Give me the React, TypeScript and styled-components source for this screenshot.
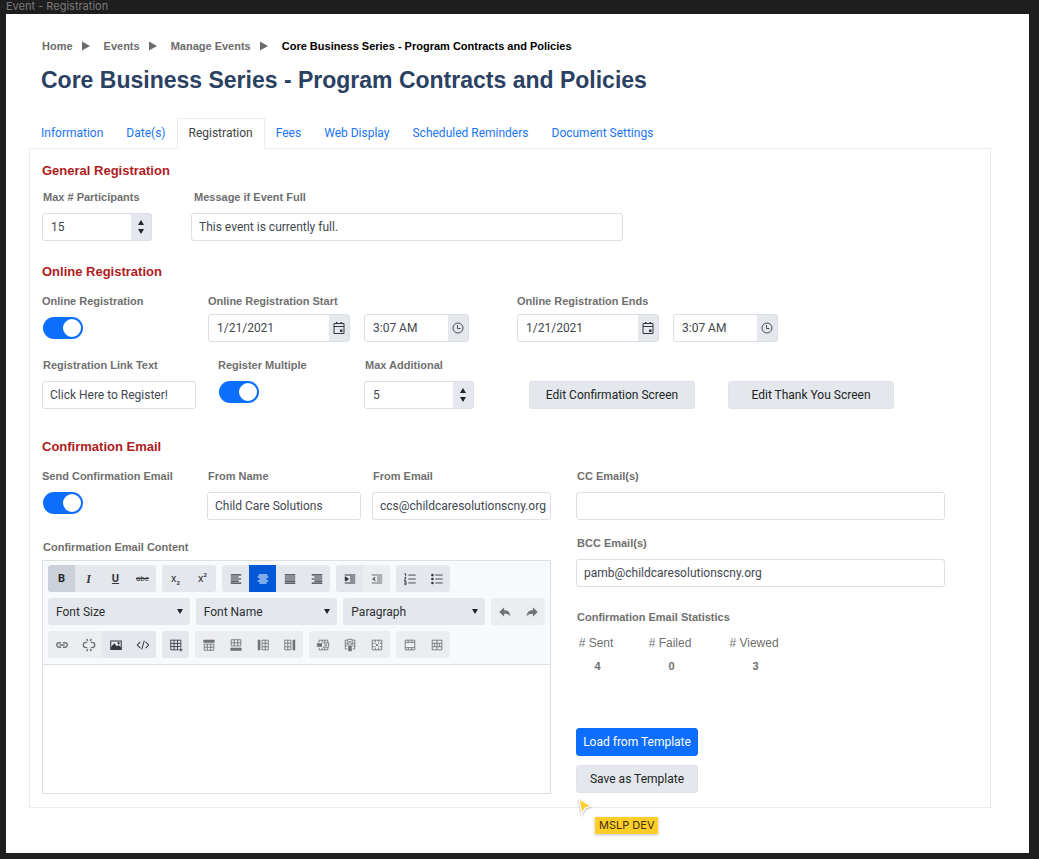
import React from "react";
import styled, { createGlobalStyle, css } from "styled-components";

const sans = `"Liberation Sans", Arial, sans-serif`;
const roboto = `Roboto, "Liberation Sans", sans-serif`;

const GlobalStyle = createGlobalStyle`
  *, *::before, *::after { box-sizing: border-box; }
  body {
    margin: 0;
    background: #1e1e1e;
    font-family: ${roboto};
    font-size: 12px;
    line-height: 16px;
    color: #424242;
  }
  button, input, select, textarea { font: inherit; color: inherit; }
`;

const Canvas = styled.div`
  display: flex;
  flex-direction: column;
  padding: 0 10px 6px 6px;
`;

const FrameName = styled.div`
  height: 14px;
  font-family: Inter, sans-serif;
  font-size: 11px;
  line-height: 12px;
  color: #7b7b7b;
`;

const Frame = styled.main`
  padding: 24px 38px 45px 23px;
  background: #fff;
`;

const Crumbs = styled.ol`
  display: flex;
  margin: 0;
  padding: 0 0 0 13px;
  list-style: none;
  font-family: ${sans};
  font-size: 11px;
  font-weight: 700;
  line-height: 16px;
`;

const Crumb = styled.li`
  display: flex;
  align-items: center;
  color: #000;

  a { color: #6b6b6b; text-decoration: none; }
  svg { margin: 0 14px 0 9px; }
`;

const Title = styled.h1`
  margin: 10px 0 22px 12px;
  font-family: ${sans};
  font-size: 23px;
  line-height: 32px;
  color: #2b4162;
`;

const Tabs = styled.nav`
  display: flex;
  height: 31px;
  margin-bottom: -1px;
`;

const Tab = styled.a<{ $active?: boolean }>`
  position: relative;
  padding: 6px 11px 0;
  margin-right: -1px;
  border: 1px solid ${(p) => (p.$active ? "#ececee" : "transparent")};
  border-bottom: 0;
  background: ${(p) => (p.$active ? "#fff" : "transparent")};
  color: ${(p) => (p.$active ? "#424242" : "#1a74f5")};
  text-decoration: none;
`;

const Panel = styled.form`
  padding: 12px 12px 13px;
  border: 1px solid #ececee;
`;

const Section = styled.section`
  & + & { margin-top: 21px; }
  & + &:last-of-type { margin-top: 28px; }
`;

const Heading = styled.h2<{ $gap?: number }>`
  margin: 0 0 ${(p) => p.$gap ?? 11}px;
  font-family: ${sans};
  font-size: 13px;
  line-height: 20px;
  color: #ae1b20;
`;

const Row = styled.div<{ $cols: string }>`
  display: grid;
  grid-template-columns: ${(p) => p.$cols};
  align-items: start;
  & + & { margin-top: 15px; }
`;

const Field = styled.div<{ $gap?: number; $width?: number }>`
  display: flex;
  flex-direction: column;
  align-items: flex-start;
  gap: ${(p) => p.$gap ?? 8}px;
  max-width: ${(p) => (p.$width ? `${p.$width}px` : "none")};
`;

const labelText = css`
  font-family: ${sans};
  font-size: 11px;
  font-weight: 700;
  line-height: 16px;
  color: #6f6f6f;
  white-space: nowrap;
`;

const Label = styled.label<{ $indent?: number }>`
  ${labelText}
  padding-left: ${(p) => p.$indent ?? 0}px;
`;

const TextInput = styled.input`
  width: 100%;
  height: 28px;
  padding: 0 0 0 7px;
  border: 1px solid #dcdfe5;
  border-radius: 3px;
  background: #fff;
  color: #424750;
`;

const Combo = styled.div<{ $width: number }>`
  display: flex;
  width: ${(p) => p.$width}px;
  height: 28px;
  overflow: hidden;
  border: 1px solid #dcdfe5;
  border-radius: 3px;
  background: #e4e7eb;

  input {
    flex: 1;
    min-width: 0;
    padding: 0 8px;
    border: 0;
    background: #fff;
    color: #424750;
    appearance: textfield;
  }
  input::-webkit-inner-spin-button { display: none; }
`;

const ComboButton = styled.button`
  display: grid;
  place-items: center;
  width: 20px;
  padding: 0;
  border: 0;
  background: transparent;
`;

const Steppers = styled.div`
  display: flex;
  flex-direction: column;
  justify-content: center;
  gap: 4px;

  button { height: 5px; }
`;

const Pair = styled.div`
  display: flex;
  gap: 14px;
`;

const Switch = styled.input.attrs({ type: "checkbox", role: "switch" })`
  appearance: none;
  width: 40px;
  height: 22px;
  margin: 0 0 0 1px;
  border-radius: 11px;
  background: #dcdfe5;

  &::before {
    content: "";
    display: block;
    width: 18px;
    height: 18px;
    margin: 2px;
    border-radius: 50%;
    background: #fff;
  }
  &:checked { background: #0d6efd; }
  &:checked::before { margin-left: 20px; }
`;

const Button = styled.button<{ $primary?: boolean; $width: number }>`
  align-self: end;
  width: ${(p) => p.$width}px;
  height: 28px;
  padding: 0;
  border: 1px solid ${(p) => (p.$primary ? "#0d6efd" : "#dfe2e7")};
  border-radius: 3px;
  background: ${(p) => (p.$primary ? "#0d6efd" : "#e4e7eb")};
  color: ${(p) => (p.$primary ? "#fff" : "#212529")};
`;

const Columns = styled.div`
  display: grid;
  grid-template-columns: 509fr 369fr;
  column-gap: 25px;
  margin-right: 33px;
`;

const Stack = styled.div<{ $gap: number }>`
  display: flex;
  flex-direction: column;
  align-items: stretch;
  gap: ${(p) => p.$gap}px;
  min-width: 0;
`;

const Editor = styled.div`
  display: flex;
  flex-direction: column;
  width: 100%;
  height: 234px;
  border: 1px solid #dcdfe3;
`;

const Toolbar = styled.div`
  display: flex;
  flex-direction: column;
  gap: 6px;
  padding: 4px 5px 6px;
  border-bottom: 1px solid #dcdfe3;
  background: #f8f9fb;
`;

const ToolRow = styled.div`
  display: flex;
  gap: 6px;
`;

const Group = styled.div`
  display: flex;
  overflow: hidden;
  border-radius: 3px;
`;

const toolTone = {
  normal: css`background: #e4e7eb; color: #34373c;`,
  disabled: css`background: #ecedf0; color: #6f7276;`,
  pressed: css`background: #cbd0d9; color: #212529;`,
  active: css`background: #0058d6; color: #fff;`,
};

const Tool = styled.button<{ $tone: keyof typeof toolTone }>`
  display: grid;
  place-items: center;
  width: 27px;
  height: 27px;
  padding: 0;
  border: 0;
  ${(p) => toolTone[p.$tone]}
`;

const Glyph = styled.span<{ $kind: "bold" | "italic" | "underline" | "strike" | "script" }>`
  font-size: 11px;
  line-height: 14px;
  ${(p) => p.$kind === "bold" && css`font-weight: 700;`}
  ${(p) => p.$kind === "underline" && css`font-weight: 700; text-decoration: underline;`}
  ${(p) => p.$kind === "italic" && css`font: italic 700 12px/14px "Liberation Serif", serif;`}
  ${(p) => p.$kind === "strike" && css`font-size: 8px; text-decoration: line-through;`}
  sub, sup { font-size: 6px; font-weight: 700; line-height: 0; }
`;

const Picker = styled.div`
  position: relative;
  flex: 1;

  select {
    width: 100%;
    height: 27px;
    padding: 0 8px;
    border: 0;
    border-radius: 3px;
    background: #e4e7eb;
    color: #2c2f34;
    appearance: none;
  }
  svg { position: absolute; right: 7px; top: 11px; pointer-events: none; }
`;

const Content = styled.textarea`
  flex: 1;
  width: 100%;
  padding: 8px;
  border: 0;
  background: #fff;
  resize: none;
`;

const Stats = styled.table`
  margin-top: 22px;
  border-collapse: collapse;
  table-layout: fixed;
  width: 208px;
  font-family: ${sans};
  color: #6f6f6f;

  caption { ${labelText} text-align: left; padding: 0 0 10px 1px; }
  th, td { padding: 0; text-align: center; line-height: 16px; white-space: nowrap; }
  th { font-size: 12px; font-weight: 400; }
  td { padding-top: 7px; padding-left: 3px; font-size: 11px; font-weight: 700; }
  th:nth-child(1) { width: 40px; }
  th:nth-child(2) { width: 108px; }
`;

const Actions = styled.div`
  position: relative;
  display: flex;
  flex-direction: column;
  gap: 9px;
  width: 122px;
  margin-top: 54px;
`;

const Pointer = styled.div`
  position: absolute;
  left: 1px;
  top: 69px;
  pointer-events: none;

  svg { display: block; filter: drop-shadow(0 1px 1px rgba(0, 0, 0, 0.3)); }
  span {
    display: block;
    margin-left: 18px;
    padding: 0 4px;
    background: #ffcd29;
    box-shadow: 0 1px 3px rgba(0, 0, 0, 0.25);
    font: 11px/17px Inter, sans-serif;
    color: #3c3210;
    white-space: nowrap;
  }
`;

const Triangle = ({ dir }: { dir: "up" | "down" | "right" }) =>
  dir === "right" ? (
    <svg width="8" height="10" viewBox="0 0 8 10" aria-hidden="true"><path d="M0 .5 8 5 0 9.500z" fill="#6b6b6b" /></svg>
  ) : (
    <svg width="6" height="5" viewBox="0 0 6 5" aria-hidden="true">
      <path d={dir === "up" ? "M0 5 3 0 6 5z" : "M0 0 3 5 6 0z"} fill="#212529" />
    </svg>
  );

const CalendarIcon = () => (
  <svg width="12" height="12" viewBox="0 0 12 12" fill="none" stroke="#34373c" aria-hidden="true">
    <path d="M1 1.500h10v10H1zM1 4.500h10" />
    <path d="M3 1h1.500M7.500 1H9" strokeWidth="2" />
    <path d="M7 7.500h2.500V10H7z" fill="#34373c" stroke="none" />
  </svg>
);

const ClockIcon = () => (
  <svg width="12" height="12" viewBox="0 0 12 12" fill="none" stroke="#4a4d52" aria-hidden="true">
    <circle cx="6" cy="6" r="5" />
    <path d="M5.500 3v3.500H8.500" />
  </svg>
);

const icons: Record<string, React.ReactNode> = {
  left: <path d="M2 3.400h12M2 5.700h9M2 8h12M2 10.300h9M2 12.600h12" strokeWidth="1.400" />,
  center: <path d="M3 3.400h10M2 5.700h12M4 8h8M2 10.300h12M4 12.600h8" strokeWidth="1.200" />,
  justify: <path d="M2 3.400h12M2 5.700h12M2 8h12M2 10.300h12M2 12.600h12" strokeWidth="1.400" />,
  right: <path d="M2 3.400h12M5 5.700h9M2 8h12M5 10.300h9M2 12.600h12" strokeWidth="1.400" />,
  indent: <><path d="M2 3.400h12M8 5.700h6M8 8h6M8 10.300h6M2 12.600h12" strokeWidth="1.200" /><path d="M2 5h1v2l4 1-4 3v-1H2zM3 5l4 3-4 3z" fill="currentColor" stroke="none" /></>,
  outdent: <><path d="M2 3.400h12M8 5.700h6M8 8h6M8 10.300h6M2 12.600h12" strokeWidth="1.200" /><path d="M6 5 2 8l4 3z" fill="currentColor" stroke="none" /></>,
  ordered: <path d="M6 3.500h8.500M6 8h8.500M6 12.500h8.500M1.500 2H3v3M1.500 6.500h2L1.500 9.500h2M1.500 11h2v3.500h-2M1.500 12.800h2" />,
  bullets: <><path d="M6 3.500h8.500M6 8h8.500M6 12.500h8.500" /><g fill="currentColor" stroke="none"><circle cx="2.800" cy="3.500" r="1.500" /><circle cx="2.800" cy="8" r="1.500" /><circle cx="2.800" cy="12.500" r="1.500" /></g></>,
  undo: <path d="M7 2.500V6c5 0 7 3 7 7-1.500-2.300-3.500-3-7-3v3.500L1.500 8z" fill="currentColor" stroke="none" />,
  redo: <path d="M9 2.500V6c-5 0-7 3-7 7 1.500-2.300 3.500-3 7-3v3.500L14.500 8z" fill="currentColor" stroke="none" />,
  link: <path d="M7 10.500H4.500a2.500 2.500 0 0 1 0-5H7M9 5.500h2.500a2.500 2.500 0 0 1 0 5H9M5 8h6" strokeWidth="1.600" />,
  unlink: <path d="M6 11H4.500a3 3 0 0 1 0-6H6M10 5h1.500a3 3 0 0 1 0 6H10M6.500 3.500 5.500 1M9.500 3.500l1-2.500M6.500 12.500l-1 2.500M9.500 12.500l1 2.500" strokeWidth="1.600" />,
  image: <><path d="M2 3.500h12v9.500H2z" strokeWidth="1.200" /><path d="M2.500 13v-3L6 6l3 3.500L11 8l3 3v2z" fill="currentColor" stroke="none" /><circle cx="11" cy="6" r="1.300" fill="currentColor" stroke="none" /></>,
  code: <path d="M5 4.500 1.500 8 5 11.500M11 4.500 14.500 8 11 11.500M9.500 3l-3 10" strokeWidth="1.200" />,
  table: <path d="M2 2.500h11.500V11M2 2v11.500h9M2 6.200h11.500M2 9.800h11.500M5.800 2.500v11M9.700 2.500v11M13.500 11.500v4M11.500 13.500h4" />,
  rowAbove: <><path d="M1.500 2h13v3.500h-13z" fill="currentColor" stroke="none" /><path d="M2.500 7v7h11V7M2.500 10.500h11M6 7v7M10 7v7M2.500 7h11" /></>,
  rowBelow: <><path d="M1.500 11h13v3.500h-13z" fill="currentColor" stroke="none" /><path d="M2.500 2v7h11V2M2.500 5.500h11M6 2v7M10 2v7M2.500 2h11" /></>,
  colLeft: <><path d="M2 2h3v12H2z" fill="currentColor" stroke="none" /><path d="M7 2.500h7v11H7zM10.500 2.500v11M7 6h7M7 10h7" /></>,
  colRight: <><path d="M11 2h3v12h-3z" fill="currentColor" stroke="none" /><path d="M2 2.500h7v11H2zM5.500 2.500v11M2 6h7M2 10h7" /></>,
  deleteRow: <><path d="M3.500 5V2.500h10V5M7 2.500V5M10 2.500V5M3.500 11v2.500h10V11M7 11v2.500M10 11v2.500M8 5.500h6.500v5H8M9.500 6.500l3 3M12.500 6.500l-3 3" /><path d="M1 6h6v4H1z" fill="currentColor" stroke="none" /></>,
  deleteColumn: <><path d="M5 2.500H2.500v10H5M2.500 6H5M2.500 9H5M11 2.500h2.500v10H11M11 6h2.500M11 9h2.500M5.500 1.500h5V8h-5zM6.500 3.500l3 3M9.500 3.500l-3 3" /><path d="M6 9h4v6H6z" fill="currentColor" stroke="none" /></>,
  deleteTable: <><path d="M2.500 2.500h11v11h-11z" /><path d="M6 2.500V5M10 2.500V5M6 11v2.500M10 11v2.500M2.500 6H5M2.500 10H5M11 6h2.500M11 10h2.500M6 6l4 4M10 6l-4 4" /></>,
  merge: <path d="M2.500 2.500h11v11h-11zM2.500 5h11M2.500 11h11M6 2.500V5M10 2.500V5M6 11v2.500M10 11v2.500" />,
  split: <path d="M2.500 2.500h11v11h-11zM2.500 6h11M2.500 10h11M8 2.500v11M5.300 6v4M10.700 6v4" />,
};

type Item = [label: string, icon: React.ReactNode, tone?: keyof typeof toolTone];

const ToolGroup = ({ items }: { items: Item[] }) => (
  <Group role="group">
    {items.map(([label, icon, tone = "normal"]) => (
      <Tool key={label} type="button" aria-label={label} title={label} $tone={tone} disabled={tone === "disabled"}>
        {typeof icon === "string" ? (
          <svg width="14" height="14" viewBox="0 0 16 16" fill="none" stroke="currentColor" aria-hidden="true">{icons[icon]}</svg>
        ) : icon}
      </Tool>
    ))}
  </Group>
);

const textGroup: Item[] = [
  ["Bold", <Glyph $kind="bold">B</Glyph>, "pressed"],
  ["Italic", <Glyph $kind="italic">I</Glyph>],
  ["Underline", <Glyph $kind="underline">U</Glyph>],
  ["Strikethrough", <Glyph $kind="strike">abc</Glyph>],
];
const scriptGroup: Item[] = [
  ["Subscript", <Glyph $kind="script">x<sub>2</sub></Glyph>],
  ["Superscript", <Glyph $kind="script">x<sup>2</sup></Glyph>],
];
const alignGroup: Item[] = [["Align left", "left"], ["Align center", "center", "active"], ["Justify", "justify"], ["Align right", "right"]];
const indentGroup: Item[] = [["Indent", "indent"], ["Outdent", "outdent", "disabled"]];
const listGroup: Item[] = [["Ordered list", "ordered"], ["Bulleted list", "bullets"]];
const historyGroup: Item[] = [["Undo", "undo", "disabled"], ["Redo", "redo", "disabled"]];
const insertGroup: Item[] = [["Insert link", "link", "disabled"], ["Remove link", "unlink", "disabled"], ["Insert image", "image"], ["View source", "code"]];
const addGroup: Item[] = [
  ["Add row above", "rowAbove", "disabled"], ["Add row below", "rowBelow", "disabled"],
  ["Add column left", "colLeft", "disabled"], ["Add column right", "colRight", "disabled"],
];
const deleteGroup: Item[] = [["Delete row", "deleteRow", "disabled"], ["Delete column", "deleteColumn", "disabled"], ["Delete table", "deleteTable", "disabled"]];
const cellGroup: Item[] = [["Merge cells", "merge", "disabled"], ["Split cell", "split", "disabled"]];

const Dropdown = ({ name }: { name: string }) => (
  <Picker>
    <select aria-label={name}><option>{name}</option></select>
    <Triangle dir="down" />
  </Picker>
);

const NumberBox = ({ id, value }: { id: string; value: number }) => (
  <Combo $width={110}>
    <input id={id} type="number" defaultValue={value} />
    <Steppers>
      <ComboButton type="button" aria-label="Increase"><Triangle dir="up" /></ComboButton>
      <ComboButton type="button" aria-label="Decrease"><Triangle dir="down" /></ComboButton>
    </Steppers>
  </Combo>
);

const DateTime = ({ id, label }: { id: string; label: string }) => (
  <Field $gap={5}>
    <Label htmlFor={id}>{label}</Label>
    <Pair>
      <Combo $width={142}>
        <input id={id} defaultValue="1/21/2021" />
        <ComboButton type="button" aria-label="Choose date"><CalendarIcon /></ComboButton>
      </Combo>
      <Combo $width={105}>
        <input aria-label={`${label} time`} defaultValue="3:07 AM" />
        <ComboButton type="button" aria-label="Choose time"><ClockIcon /></ComboButton>
      </Combo>
    </Pair>
  </Field>
);

const TextField = ({ id, label, value, width }: { id: string; label: string; value?: string; width?: number }) => (
  <Field $width={width}>
    <Label htmlFor={id} $indent={1}>{label}</Label>
    <TextInput id={id} defaultValue={value} />
  </Field>
);

const tabs = ["Information", "Date(s)", "Registration", "Fees", "Web Display", "Scheduled Reminders", "Document Settings"];

export default function App() {
  return (
    <Canvas>
      <GlobalStyle />
      <FrameName>Event - Registration</FrameName>
      <Frame>
        <Crumbs>
          {["Home", "Events", "Manage Events"].map((c) => (
            <Crumb key={c}><a href="#">{c}</a><Triangle dir="right" /></Crumb>
          ))}
          <Crumb aria-current="page">Core Business Series - Program Contracts and Policies</Crumb>
        </Crumbs>
        <Title>Core Business Series - Program Contracts and Policies</Title>
        <Tabs>
          {tabs.map((t) => <Tab key={t} href="#" $active={t === "Registration"}>{t}</Tab>)}
        </Tabs>
        <Panel>
          <Section>
            <Heading $gap={8}>General Registration</Heading>
            <Row $cols="149px minmax(0, 432px)">
              <Field>
                <Label htmlFor="max" $indent={1}>Max # Participants</Label>
                <NumberBox id="max" value={15} />
              </Field>
              <Field>
                <Label htmlFor="full" $indent={3}>Message if Event Full</Label>
                <TextInput id="full" defaultValue="This event is currently full." />
              </Field>
            </Row>
          </Section>
          <Section>
            <Heading>Online Registration</Heading>
            <Row $cols="166px 309px 1fr">
              <Field>
                <Label htmlFor="online">Online Registration</Label>
                <Switch id="online" defaultChecked />
              </Field>
              <DateTime id="start" label="Online Registration Start" />
              <DateTime id="end" label="Online Registration Ends" />
            </Row>
            <Row $cols="176px 146px 165px 199px 1fr">
              <TextField id="link" label="Registration Link Text" value="Click Here to Register!" width={154} />
              <Field>
                <Label htmlFor="multi">Register Multiple</Label>
                <Switch id="multi" defaultChecked />
              </Field>
              <Field>
                <Label htmlFor="additional" $indent={1}>Max Additional</Label>
                <NumberBox id="additional" value={5} />
              </Field>
              <Button type="button" $width={166}>Edit Confirmation Screen</Button>
              <Button type="button" $width={166}>Edit Thank You Screen</Button>
            </Row>
          </Section>
          <Section>
            <Heading>Confirmation Email</Heading>
            <Columns>
              <Stack $gap={19}>
                <Row $cols="165fr 165fr 179fr">
                  <Field>
                    <Label htmlFor="send">Send Confirmation Email</Label>
                    <Switch id="send" defaultChecked />
                  </Field>
                  <TextField id="from" label="From Name" value="Child Care Solutions" width={154} />
                  <TextField id="fromEmail" label="From Email" value="ccs@childcaresolutionscny.org" />
                </Row>
                <Field $gap={5}>
                  <Label htmlFor="content" $indent={1}>Confirmation Email Content</Label>
                  <Editor>
                    <Toolbar role="toolbar">
                      <ToolRow>
                        <ToolGroup items={textGroup} />
                        <ToolGroup items={scriptGroup} />
                        <ToolGroup items={alignGroup} />
                        <ToolGroup items={indentGroup} />
                        <ToolGroup items={listGroup} />
                      </ToolRow>
                      <ToolRow>
                        <Dropdown name="Font Size" />
                        <Dropdown name="Font Name" />
                        <Dropdown name="Paragraph" />
                        <ToolGroup items={historyGroup} />
                      </ToolRow>
                      <ToolRow>
                        <ToolGroup items={insertGroup} />
                        <ToolGroup items={[["Insert table", "table"]]} />
                        <ToolGroup items={addGroup} />
                        <ToolGroup items={deleteGroup} />
                        <ToolGroup items={cellGroup} />
                      </ToolRow>
                    </Toolbar>
                    <Content id="content" />
                  </Editor>
                </Field>
              </Stack>
              <div>
                <Stack $gap={15}>
                  <TextField id="cc" label="CC Email(s)" />
                  <TextField id="bcc" label="BCC Email(s)" value="pamb@childcaresolutionscny.org" />
                </Stack>
                <Stats>
                  <caption>Confirmation Email Statistics</caption>
                  <thead><tr><th scope="col"># Sent</th><th scope="col"># Failed</th><th scope="col"># Viewed</th></tr></thead>
                  <tbody><tr><td>4</td><td>0</td><td>3</td></tr></tbody>
                </Stats>
                <Actions>
                  <Button type="button" $width={122} $primary>Load from Template</Button>
                  <Button type="button" $width={122}>Save as Template</Button>
                  <Pointer>
                    <svg width="16" height="20" viewBox="0 0 16 20" aria-hidden="true">
                      <path d="M2 2 14 9 8 11 5 17z" fill="#ffcd29" stroke="#fff" strokeWidth="1.200" />
                    </svg>
                    <span>MSLP DEV</span>
                  </Pointer>
                </Actions>
              </div>
            </Columns>
          </Section>
        </Panel>
      </Frame>
    </Canvas>
  );
}
